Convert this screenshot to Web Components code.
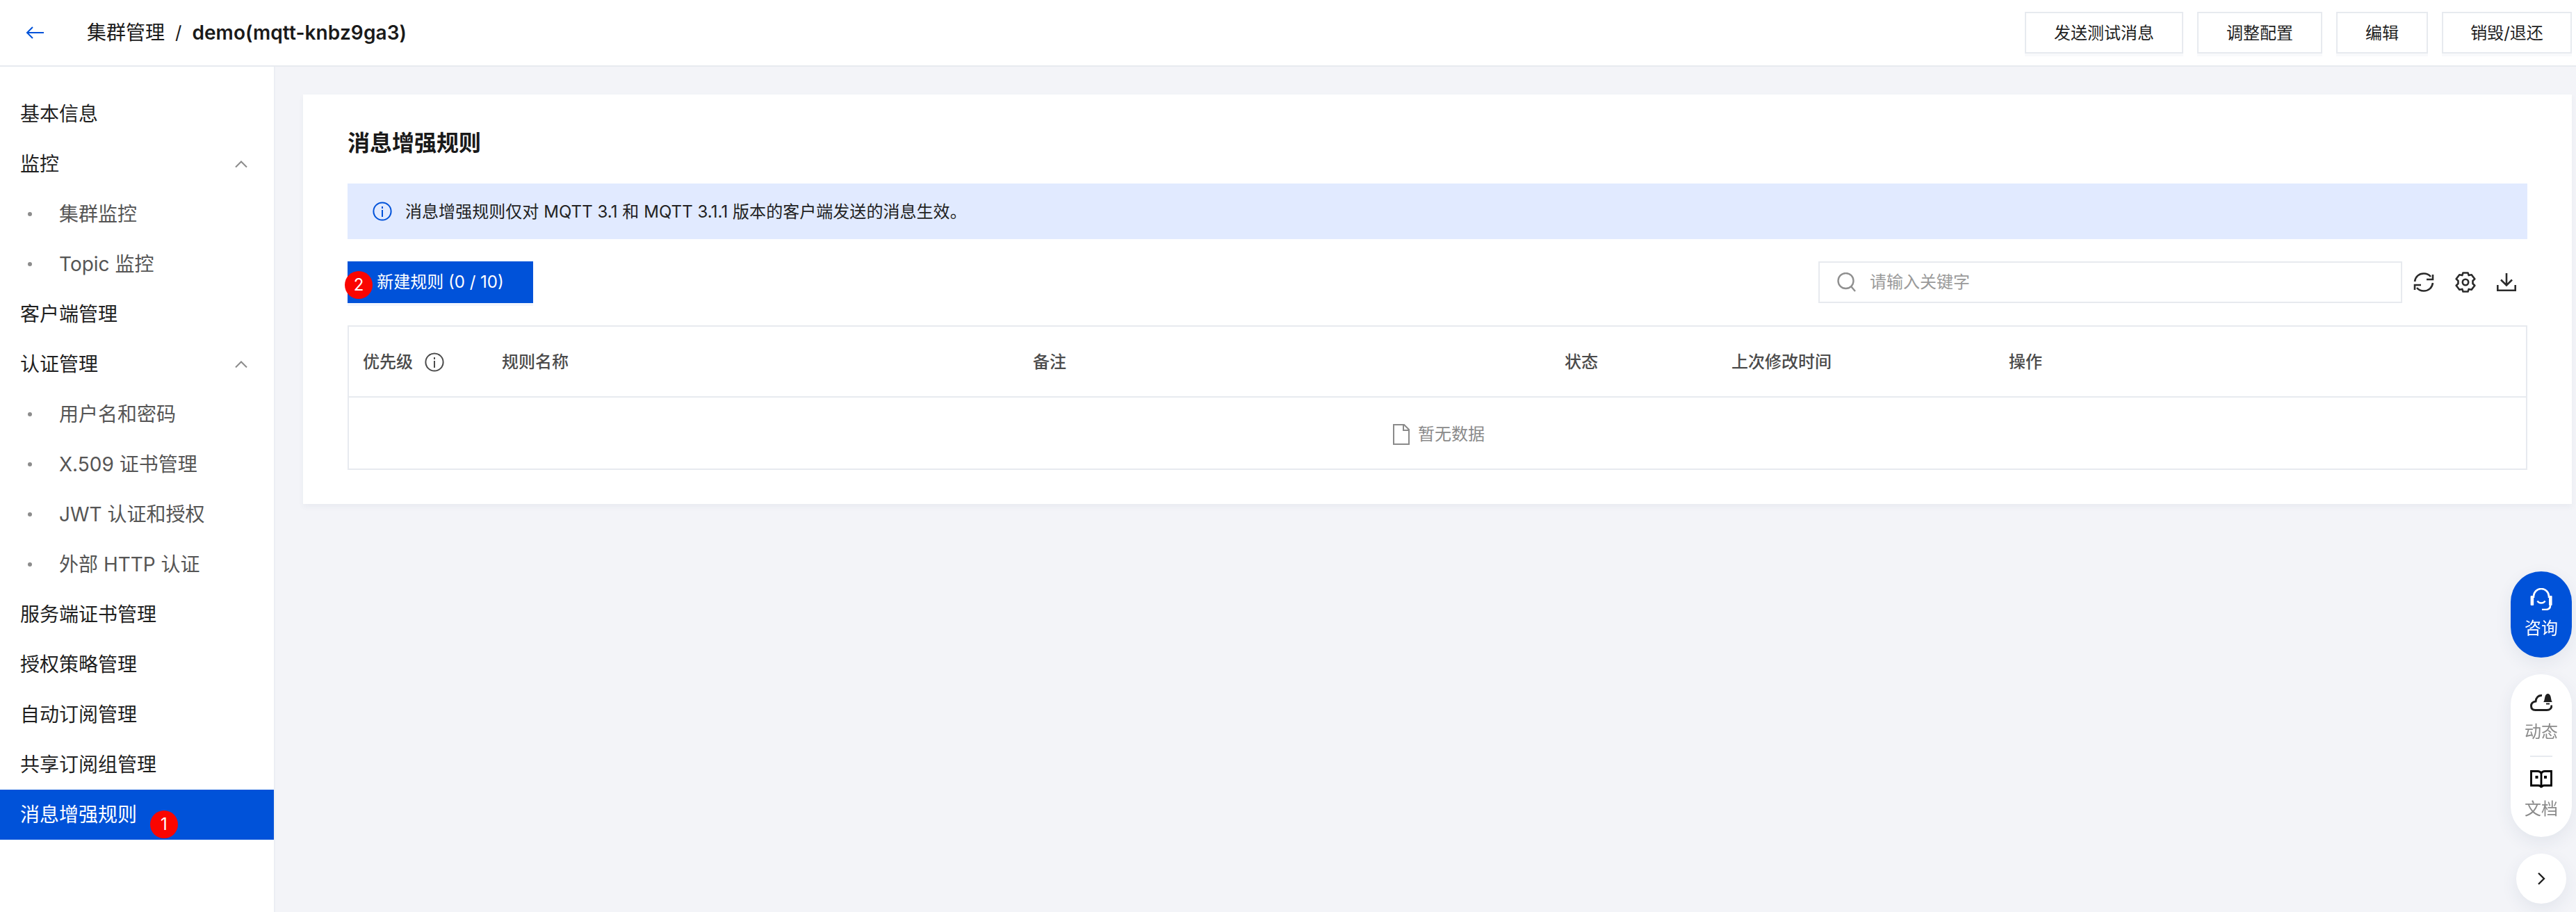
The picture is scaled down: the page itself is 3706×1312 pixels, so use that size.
<!DOCTYPE html>
<html lang="zh-CN">
<head>
<meta charset="utf-8">
<title>消息增强规则</title>
<style>
  html, body { margin: 0; height: 100%; }
  body {
    width: 3706px;
    height: 1312px;
    overflow: hidden;
    background: #f3f4f8;
    font-family: Inter, "Noto Sans CJK SC", sans-serif;
    font-size: 24px;
    color: #1f1f1f;
  }
</style>
</head>
<body>
<app-shell>
  <top-bar slot="top">
    <span slot="crumb">集群管理</span>
    <span slot="current">demo(mqtt-knbz9ga3)</span>
    <ui-button slot="actions">发送测试消息</ui-button>
    <ui-button slot="actions">调整配置</ui-button>
    <ui-button slot="actions">编辑</ui-button>
    <ui-button slot="actions" style="width:187px;padding:2px 0 0">销毁/退还</ui-button>
  </top-bar>

  <side-nav slot="side">
    <nav-item>基本信息</nav-item>
    <nav-item expandable>监控</nav-item>
    <nav-item child>集群监控</nav-item>
    <nav-item child>Topic 监控</nav-item>
    <nav-item>客户端管理</nav-item>
    <nav-item expandable>认证管理</nav-item>
    <nav-item child>用户名和密码</nav-item>
    <nav-item child>X.509 证书管理</nav-item>
    <nav-item child>JWT 认证和授权</nav-item>
    <nav-item child>外部 HTTP 认证</nav-item>
    <nav-item>服务端证书管理</nav-item>
    <nav-item>授权策略管理</nav-item>
    <nav-item>自动订阅管理</nav-item>
    <nav-item>共享订阅组管理</nav-item>
    <nav-item active>消息增强规则<step-badge style="left:216px;top:30px">1</step-badge></nav-item>
  </side-nav>

  <rule-card slot="main">
    <span slot="title">消息增强规则</span>
    <info-alert slot="alert">消息增强规则仅对 MQTT 3.1 和 MQTT 3.1.1 版本的客户端发送的消息生效。</info-alert>
    <ui-button slot="create" primary>新建规则 (0 / 10)<step-badge style="left:-6px;top:12px">2</step-badge></ui-button>
    <search-box slot="search" placeholder="请输入关键字"></search-box>
    <tool-icons slot="tools"></tool-icons>
    <rule-table slot="table"></rule-table>
  </rule-card>
</app-shell>
<float-tools></float-tools>

<script>
const icons = {
  back: '<svg width="26" height="18" viewBox="0 0 26 18" fill="none" stroke="#0052d9" stroke-width="2"><path d="M26 9H2M10 1L2 9l8 8"/></svg>',
  info: '<svg width="28" height="28" viewBox="0 0 28 28" fill="none" stroke="currentColor" stroke-width="2"><circle cx="14" cy="14" r="12.6"/><path d="M14 12v10"/><path d="M14 7v3"/></svg>',
  chevronUp: '<svg width="18" height="10" viewBox="0 0 18 10" fill="none" stroke="#8a8a8a" stroke-width="2"><path d="M1 9.5L9 1.5l8 8"/></svg>',
  search: '<svg width="30" height="28" viewBox="0 0 30 28" fill="none" stroke="#8f8f8f" stroke-width="2.4"><circle cx="13.5" cy="12" r="11"/><path d="M21 20l6 7"/></svg>',
  refresh: '<svg width="30" height="28" viewBox="0 0 30 28" fill="none" stroke="#2b2b2b" stroke-width="2.6"><path d="M2 13C3 6 8 1.500 15 1.500c4 0 7.500 1.500 10 4.500"/><path d="M28 3v7h-9"/><path d="M28 15c-1 7-6 11.500-13 11.500-4 0-7.500-1.500-10-4.500"/><path d="M2 25v-7h9"/></svg>',
  gear: '<svg width="30" height="30" viewBox="0 0 30 30" fill="none" stroke="#2b2b2b" stroke-width="2.6" stroke-linejoin="round"><path d="M11.500 1.500h7l1.200 3.600 4-.9 4.600 6.100-2.800 2.700v4l2.800 2.700-4.600 6.100-4-.9-1.200 3.600h-7l-1.200-3.600-4 .9-4.600-6.100 2.800-2.700v-4l-2.800-2.700 4.600-6.100 4 .9z"/><circle cx="15" cy="15" r="4.200"/></svg>',
  download: '<svg width="28" height="26" viewBox="0 0 28 26" fill="none" stroke="#2b2b2b" stroke-width="2.6"><path d="M14 0v17M6 9.500l8 8 8-8"/><path d="M1.300 17v7.700h25.400V17"/></svg>',
  file: '<svg width="24" height="30" viewBox="0 0 24 30" fill="none" stroke="#8a8a8a" stroke-width="2"><path d="M1 1h15l7 7v21H1z"/><path d="M15 1v8h8"/></svg>',
  headset: '<svg width="32" height="32" viewBox="0 0 32 32"><path d="M5 14v-2a11 11 0 0 1 22 0v2M29 25c0 4-3 6-7 6h-5" fill="none" stroke="#fff" stroke-width="2.600"/><rect x="0.600" y="11" width="4.600" height="14" rx="1" fill="#fff"/><rect x="27" y="11" width="4.600" height="14" rx="1" fill="#fff"/><path d="M10.500 18.500c2 4 9 4 11 0" fill="none" stroke="#fff" stroke-width="2.400"/></svg>',
  cloud: '<svg width="32" height="26" viewBox="0 0 32 26"><path d="M17 3.500C12 3 8.500 6.500 8 12c-4.500.5-6.500 3.500-6.500 6.500 0 4 2.500 6 6 6H24c4 0 7-2.500 7-7" fill="none" stroke="#1f1f1f" stroke-width="3"/><path d="M19 13c1.500-1 1.500-4 2.500-8 .5-2 2-4 4-4s3.500 2 4 4c1 4 1 7 2.500 8z" fill="#1f1f1f"/><path d="M23 15.500h5" stroke="#1f1f1f" stroke-width="2"/></svg>',
  book: '<svg width="32" height="26" viewBox="0 0 32 26" fill="none" stroke="#000" stroke-width="2.800"><path d="M1.500 1.500H11c2 0 4 1 5 3 1-2 3-3 5-3h9.500V22H20c-2 0-3.500.5-4 3-.5-2.500-2-3-4-3H1.500zM16 4.500V24"/><rect x="7.500" y="8" width="4" height="4" fill="#000" stroke="none"/><rect x="20" y="8" width="4" height="4" fill="#000" stroke="none"/></svg>',
  next: '<svg width="12" height="18" viewBox="0 0 12 18" fill="none" stroke="#1f1f1f" stroke-width="2.400"><path d="M2 1l8 8-8 8"/></svg>'
};

class AppShell extends HTMLElement {
  constructor() {
    super();
    this.attachShadow({ mode: 'open' }).innerHTML = `
<style>
  :host { display: flex; flex-direction: column; height: 1312px; }
  .body { flex: 1; display: flex; min-height: 0; }
  .main { flex: 1; min-width: 0; padding: 40px 6px 0 40px; }
</style>
<slot name="top"></slot>
<div class="body">
  <slot name="side"></slot>
  <div class="main"><slot name="main"></slot></div>
</div>`;
  }
}

class TopBar extends HTMLElement {
  constructor() {
    super();
    this.attachShadow({ mode: 'open' }).innerHTML = `
<style>
  :host {
    display: flex; align-items: center; box-sizing: border-box;
    height: 96px; padding: 0 6px 0 37px;
    background: #fff; border-bottom: 2px solid #e7eaef;
  }
  .back { display: flex; margin-right: 62px; }
  .crumbs { display: flex; align-items: center; font-size: 28px; line-height: 40px; color: #1a1a1a; }
  .sep { margin: 0 15px; font-size: 26px; }
  .current { font-weight: 600; letter-spacing: .1px; }
  .actions { margin-left: auto; display: flex; gap: 20px; }
</style>
<span class="back">${icons.back}</span>
<div class="crumbs">
  <slot name="crumb"></slot><span class="sep">/</span>
  <span class="current"><slot name="current"></slot></span>
</div>
<div class="actions"><slot name="actions"></slot></div>`;
  }
}

class UiButton extends HTMLElement {
  constructor() {
    super();
    this.attachShadow({ mode: 'open' }).innerHTML = `
<style>
  :host {
    display: inline-flex; align-items: center; justify-content: center; position: relative;
    box-sizing: border-box; height: 60px; padding: 2px 40px 0;
    background: #fff; border: 2px solid #e7eaef; box-shadow: 0 4px 0 #f8f9fb;
    font-size: 24px; line-height: 36px; color: #1f1f1f; white-space: nowrap;
  }
  :host([primary]) {
    width: 267px; padding: 0; background: #0052d9; border-color: #0052d9;
    box-shadow: 0 4px 0 #f2f6fe; color: #fff;
  }
</style>
<slot></slot>`;
  }
}

class StepBadge extends HTMLElement {
  constructor() {
    super();
    this.attachShadow({ mode: 'open' }).innerHTML = `
<style>
  :host {
    position: absolute; display: flex; align-items: center; justify-content: center;
    width: 40px; height: 40px; border-radius: 50%;
    background: #fa0500; color: #fff; font-size: 24px; line-height: 40px;
  }
</style>
<slot></slot>`;
  }
}

class SideNav extends HTMLElement {
  constructor() {
    super();
    this.attachShadow({ mode: 'open' }).innerHTML = `
<style>
  :host {
    display: flex; flex-direction: column; box-sizing: border-box; flex: none;
    width: 396px; padding-top: 32px;
    background: #fff; border-right: 2px solid #eceef3;
  }
</style>
<slot></slot>`;
  }
}

class NavItem extends HTMLElement {
  constructor() {
    super();
    this.attachShadow({ mode: 'open' }).innerHTML = `
<style>
  :host {
    display: flex; align-items: center; position: relative; box-sizing: border-box;
    height: 72px; padding: 0 38px 0 29px;
    font-size: 28px; line-height: 40px; color: #1f1f1f; white-space: nowrap;
  }
  :host([child]) { padding-left: 85px; color: #555; }
  :host([active]) { background: #0052d9; color: #fff; }
  .dot { display: none; position: absolute; left: 40px; top: 33px; width: 6px; height: 6px; border-radius: 50%; background: #8c8c8c; }
  :host([child]) .dot { display: block; }
  .chevron { display: none; margin-left: auto; line-height: 0; }
  :host([expandable]) .chevron { display: block; }
</style>
<span class="dot"></span>
<slot></slot>
<span class="chevron">${icons.chevronUp}</span>`;
  }
}

class RuleCard extends HTMLElement {
  constructor() {
    super();
    this.attachShadow({ mode: 'open' }).innerHTML = `
<style>
  :host {
    display: block; box-sizing: border-box; padding: 46px 64px 49px;
    background: #fff; box-shadow: 0 4px 8px rgba(40, 60, 100, .05);
  }
  .title { font-size: 32px; line-height: 48px; font-weight: 600; color: #1a1a1a; margin-bottom: 34px; }
  .toolbar { display: flex; align-items: center; margin: 32px 0; }
  .right { margin-left: auto; display: flex; align-items: center; }
</style>
<div class="title"><slot name="title"></slot></div>
<slot name="alert"></slot>
<div class="toolbar">
  <slot name="create"></slot>
  <div class="right"><slot name="search"></slot><slot name="tools"></slot></div>
</div>
<slot name="table"></slot>`;
  }
}

class InfoAlert extends HTMLElement {
  constructor() {
    super();
    this.attachShadow({ mode: 'open' }).innerHTML = `
<style>
  :host {
    display: flex; align-items: center; gap: 19px; box-sizing: border-box;
    height: 80px; padding-left: 36px;
    background: #e1eaff; font-size: 24px; line-height: 36px; color: #222;
  }
  .icon { display: flex; color: #0052d9; }
  .text { padding-top: 1px; letter-spacing: .05px; }
</style>
<span class="icon">${icons.info}</span>
<span class="text"><slot></slot></span>`;
  }
}

class SearchBox extends HTMLElement {
  constructor() {
    super();
    this.attachShadow({ mode: 'open' }).innerHTML = `
<style>
  :host {
    display: flex; align-items: center; box-sizing: border-box;
    width: 840px; height: 60px; padding-left: 24px;
    background: #fff; border: 2px solid #e7eaef;
  }
  svg { flex: none; margin-right: 18px; }
  .placeholder { font-size: 24px; line-height: 36px; color: #9a9a9a; }
</style>
${icons.search}
<span class="placeholder"></span>`;
    this.shadowRoot.querySelector('.placeholder').textContent = this.getAttribute('placeholder') || '';
  }
}

class ToolIcons extends HTMLElement {
  constructor() {
    super();
    this.attachShadow({ mode: 'open' }).innerHTML = `
<style>
  :host { display: flex; align-items: center; width: 180px; box-sizing: border-box; padding-left: 16px; gap: 30px; }
  svg { display: block; flex: none; }
</style>
${icons.refresh}${icons.gear}${icons.download}`;
  }
}

class RuleTable extends HTMLElement {
  constructor() {
    super();
    this.attachShadow({ mode: 'open' }).innerHTML = `
<style>
  :host { display: block; box-sizing: border-box; border: 2px solid #e7eaef; }
  .head {
    display: grid; grid-template-columns: 200px 764px 765px 240px 399px 1fr; align-items: center;
    box-sizing: border-box; height: 102px; border-bottom: 2px solid #e7eaef;
    font-size: 24px; line-height: 36px; font-weight: 500; color: #4b4b4b;
  }
  .cell { padding-left: 20px; padding-top: 1px; display: flex; align-items: center; gap: 17px; }
  .cell svg { display: block; }
  .empty {
    display: flex; align-items: center; justify-content: center; gap: 12px; box-sizing: border-box;
    height: 102px; padding: 4px 0 0 4px;
    font-size: 24px; line-height: 36px; color: #8a8a8a;
  }
  .empty svg { display: block; }
</style>
<div class="head">
  <div class="cell">优先级 ${icons.info}</div>
  <div class="cell">规则名称</div>
  <div class="cell">备注</div>
  <div class="cell">状态</div>
  <div class="cell">上次修改时间</div>
  <div class="cell">操作</div>
</div>
<div class="empty">${icons.file}<span>暂无数据</span></div>`;
  }
}

class FloatTools extends HTMLElement {
  constructor() {
    super();
    this.attachShadow({ mode: 'open' }).innerHTML = `
<style>
  :host {
    position: fixed; right: 6px; top: 822px; width: 88px;
    display: flex; flex-direction: column; align-items: center; gap: 24px;
    font-size: 24px; line-height: 34px;
  }
  .pill {
    width: 88px; border-radius: 44px; box-sizing: border-box;
    display: flex; flex-direction: column; align-items: center;
    box-shadow: 0 8px 24px rgba(40, 60, 100, .08);
    background: #fff; color: #8a8a8a;
  }
  .ask { height: 124px; padding-top: 24px; background: #0052d9; color: #fff; }
  .ask svg { margin-bottom: 9px; }
  .news { height: 234px; padding-top: 27px; }
  .news svg { display: block; }
  .news span { margin-top: 13px; }
  .line { width: 32px; height: 2px; background: #e7eaef; margin: 17px 0 19px; }
  .round {
    width: 72px; height: 72px; border-radius: 50%; background: #fff;
    display: flex; align-items: center; justify-content: center;
    box-shadow: 0 8px 24px rgba(40, 60, 100, .08);
  }
</style>
<div class="pill ask">${icons.headset}<span>咨询</span></div>
<div class="pill news">
  ${icons.cloud}<span>动态</span>
  <div class="line"></div>
  ${icons.book}<span>文档</span>
</div>
<div class="round">${icons.next}</div>`;
  }
}

customElements.define('app-shell', AppShell);
customElements.define('top-bar', TopBar);
customElements.define('ui-button', UiButton);
customElements.define('step-badge', StepBadge);
customElements.define('side-nav', SideNav);
customElements.define('nav-item', NavItem);
customElements.define('rule-card', RuleCard);
customElements.define('info-alert', InfoAlert);
customElements.define('search-box', SearchBox);
customElements.define('tool-icons', ToolIcons);
customElements.define('rule-table', RuleTable);
customElements.define('float-tools', FloatTools);
</script>
</body>
</html>
